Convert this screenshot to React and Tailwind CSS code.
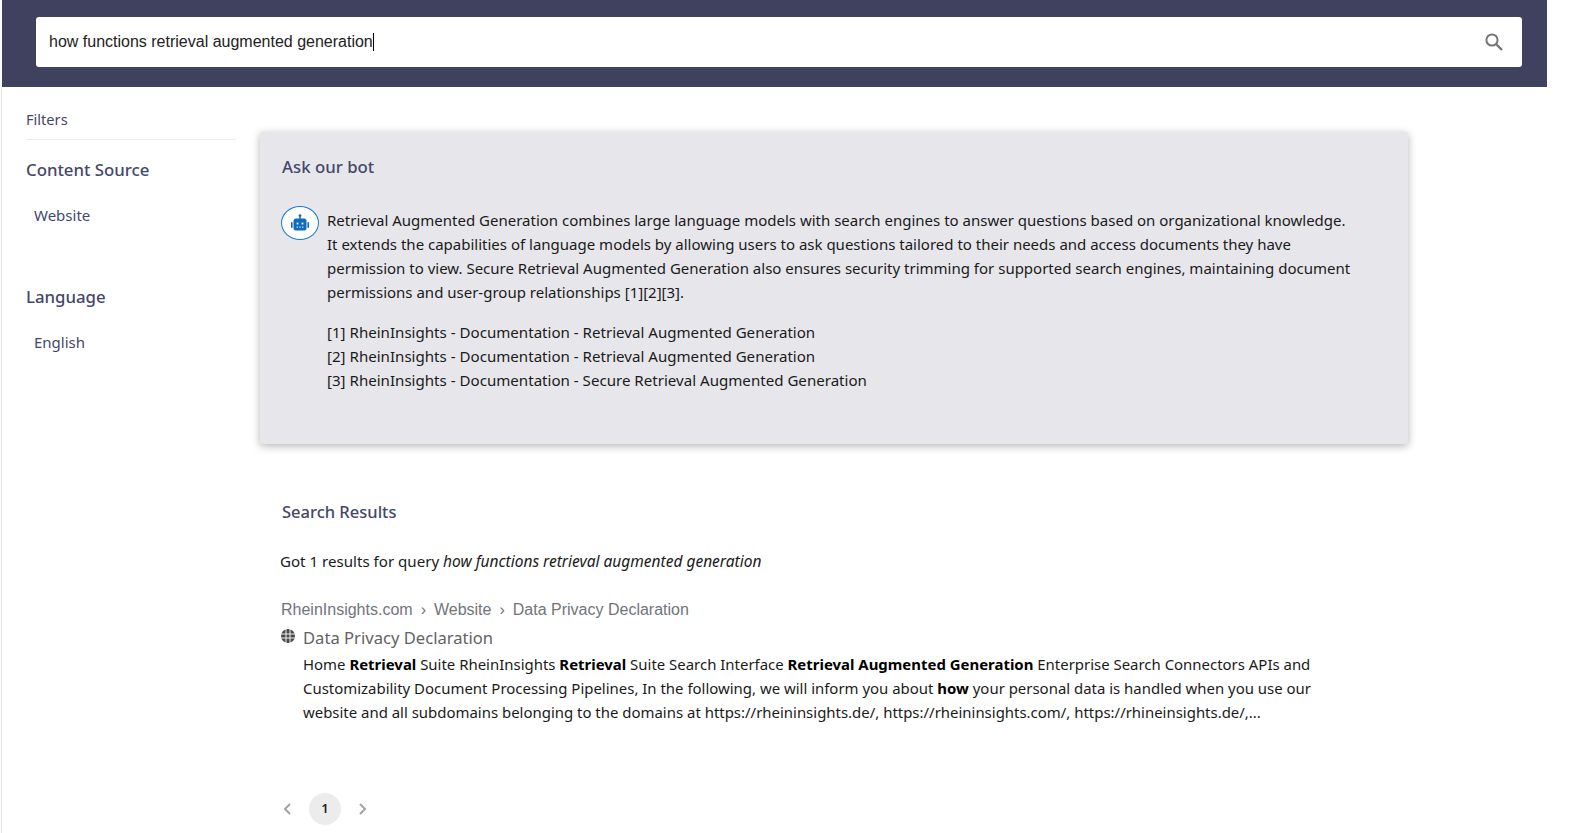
import React from "react";

const sans = "font-['Noto_Sans','Open_Sans',sans-serif]";

function BotIcon() {
  return (
    <div className="flex h-[34px] w-[38px] shrink-0 items-center justify-center rounded-[50%] border border-[#1a7fcb] bg-white">
      <svg width="22" height="22" viewBox="0 0 22 22" fill="#0f6cbd">
        <circle cx="11" cy="3.6" r="1.4" />
        <rect x="10.3" y="4" width="1.4" height="3" />
        <rect x="4.5" y="6.5" width="13" height="12" rx="2.5" />
        <rect x="2" y="10" width="1.6" height="6" rx="0.8" />
        <rect x="18.4" y="10" width="1.6" height="6" rx="0.8" />
        <rect x="7.6" y="10.6" width="1.8" height="1.8" fill="#fff" />
        <rect x="12.6" y="10.6" width="1.8" height="1.8" fill="#fff" />
        <rect x="7.6" y="14.6" width="1.4" height="1" fill="#fff" />
        <rect x="10.3" y="14.6" width="1.4" height="1" fill="#fff" />
        <rect x="13" y="14.6" width="1.4" height="1" fill="#fff" />
      </svg>
    </div>
  );
}

function Globe() {
  return (
    <svg width="14" height="14" viewBox="0 0 14 14" className="shrink-0" fill="none">
      <circle cx="7" cy="7" r="7" fill="#4b4b4b" />
      <path d="M0 5h14M0 9h14M5 0v14M9 0v14" stroke="#fff" strokeWidth="0.9" />
    </svg>
  );
}

function Chevron({ d }) {
  return (
    <svg width="16" height="16" viewBox="0 0 16 16" fill="none">
      <path d={d} stroke="#a3a3a3" strokeWidth="2" />
    </svg>
  );
}

export default function App() {
  return (
    <div className={`h-[833px] w-[1579px] overflow-hidden bg-white text-[15.1px] ${sans}`}>
      <header className="ml-[2px] flex h-[87px] w-[1545px] items-start bg-[#3f415f] pl-[34px] pt-[17px]">
        <div className="flex h-[50px] w-[1486px] items-center justify-between rounded-[3px] bg-white pl-[13px] pr-[19px]">
          <div className="flex items-center font-['Liberation_Sans',sans-serif] text-[16px] text-[#222]">
            <span>how functions retrieval augmented generation</span>
            <span className="h-[18px] w-px bg-black" />
          </div>
          <svg width="18" height="18" viewBox="0 0 18 18" fill="none" stroke="#757575" strokeWidth="2">
            <circle cx="7" cy="7" r="5.6" />
            <path d="M11 11L17 17" strokeWidth="2.4" />
          </svg>
        </div>
      </header>

      <div className="ml-[1px] flex h-[746px] border-l border-[#e5e5e5] pl-[24px]">
        <aside className="w-[210px] shrink-0 text-[#45476a]">
          <div className="flex h-[53px] items-end border-b border-[#ececee] pb-[10px] text-[14.6px] leading-[20px]">Filters</div>
          <h2 className="mt-[18px] text-[16.8px] leading-[24px] font-medium">Content Source</h2>
          <p className="mt-[21.5px] pl-[8px] text-[15px] leading-[22px]">Website</p>
          <h2 className="mt-[59.5px] text-[16.8px] leading-[24px] font-medium">Language</h2>
          <p className="mt-[21.5px] pl-[8px] text-[15px] leading-[22px]">English</p>
        </aside>

        <main className="ml-[24px] w-[1148px] pt-[45px]">
          <section className="h-[312px] rounded-[2px] bg-[#e7e7eb] pl-[22px] pt-[22px] shadow-[0_2px_8px_rgba(0,0,0,0.3)]">
            <h2 className="text-[16.8px] leading-[26px] font-medium text-[#45476a]">Ask our bot</h2>
            <div className="mt-[27.5px] -ml-px flex gap-[8px] text-[#1a1a1a]">
              <div className="mt-[-2px]"><BotIcon /></div>
              <div className="w-[1030px]">
                <p className="text-[15px] leading-[24.2px]">
                  Retrieval Augmented Generation combines large language models with search engines to answer questions based on organizational knowledge.
                  <br />
                  It extends the capabilities of language models by allowing users to ask questions tailored to their needs and access documents they have permission to view. Secure Retrieval Augmented Generation also ensures security trimming for supported search engines, maintaining document permissions and user-group relationships [1][2][3].
                </p>
                <ul className="mt-[16px] leading-[24px]">
                  <li>[1] RheinInsights - Documentation - Retrieval Augmented Generation</li>
                  <li>[2] RheinInsights - Documentation - Retrieval Augmented Generation</li>
                  <li>[3] RheinInsights - Documentation - Secure Retrieval Augmented Generation</li>
                </ul>
              </div>
            </div>
          </section>

          <section className="pl-[22px]">
            <h2 className="mt-[55px] text-[16.5px] leading-[26px] font-medium text-[#45476a]">Search Results</h2>
            <p className="mt-[24px] -ml-[2px] leading-[24px] text-[#1a1a1a]">
              Got 1 results for query <em className="text-[15.5px]">how functions retrieval augmented generation</em>
            </p>
            <div className="mt-[25px] -ml-px flex items-center gap-[8px] font-['Liberation_Sans',sans-serif] text-[16px] leading-[24px] text-[#70757a]">
              <span>RheinInsights.com</span><span>›</span><span>Website</span><span>›</span><span>Data Privacy Declaration</span>
            </div>
            <div className="mt-[4px] -ml-[2px] flex gap-[9px]">
              <div className="pt-[3px] pl-px"><Globe /></div>
              <div className="w-[1034px] -ml-px">
                <h3 className="text-[16.6px] leading-[24px] text-[#636363]">Data Privacy Declaration</h3>
                <p className="mt-[2px] text-[14.95px] leading-[24.2px] text-[#1a1a1a]">
                  Home <b className="text-black">Retrieval</b> Suite RheinInsights <b className="text-black">Retrieval</b> Suite Search Interface <b className="text-black">Retrieval Augmented Generation</b> Enterprise Search Connectors APIs and Customizability Document Processing Pipelines, In the following, we will inform you about <b className="text-black">how</b> your personal data is handled when you use our website and all subdomains belonging to the domains at https://rheininsights.de/, https://rheininsights.com/, https://rhineinsights.de/,...
                </p>
              </div>
            </div>
            <nav className="mt-[68px] -ml-[2px] flex items-center">
              <span className="flex w-[16px] justify-center"><Chevron d="M10 3L5 8l5 5" /></span>
              <span className="ml-[13px] flex h-[32px] w-[32px] items-center justify-center rounded-full bg-[#ececec] text-[13px] font-semibold text-[#222]">1</span>
              <span className="ml-[13px] flex w-[16px] justify-center"><Chevron d="M6 3l5 5-5 5" /></span>
            </nav>
          </section>
        </main>
      </div>
    </div>
  );
}
